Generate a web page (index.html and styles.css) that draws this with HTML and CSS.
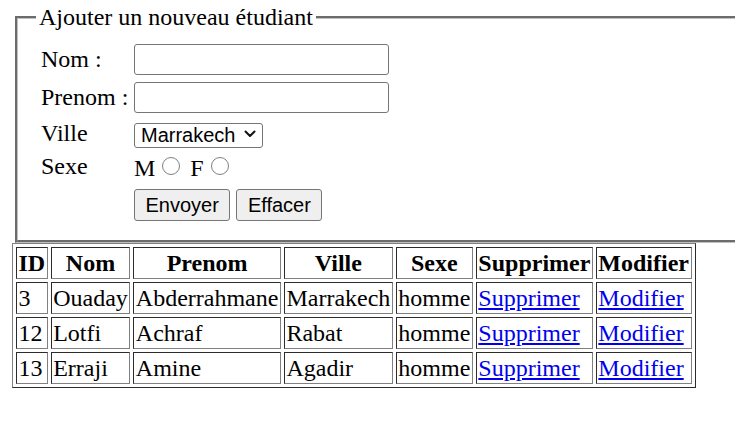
FILE: index.html
```html
<!DOCTYPE html>
<html lang="fr">
<head>
<meta charset="utf-8">
<title>Etudiants</title>
<link rel="stylesheet" href="styles.css">
</head>
<body>
<form class="student-form">
  <fieldset class="panel">
    <legend class="panel-title">Ajouter un nouveau étudiant</legend>
    <div class="form-grid">
      <label class="field-label">Nom :</label>
      <div class="field"><input type="text" class="text-input"></div>

      <label class="field-label">Prenom :</label>
      <div class="field"><input type="text" class="text-input"></div>

      <label class="field-label">Ville</label>
      <div class="field">
        <span class="select-wrap">
          <select class="city-select">
            <option>Marrakech</option>
            <option>Rabat</option>
            <option>Agadir</option>
          </select>
          <svg class="chevron" width="12" height="8" viewBox="0 0 12 8" aria-hidden="true">
            <path d="M1.5 1.5 L6 6 L10.5 1.5" fill="none" stroke="#111" stroke-width="2" stroke-linecap="round" stroke-linejoin="round"/>
          </svg>
        </span>
      </div>

      <label class="field-label sexe-label">Sexe</label>
      <div class="field sexe-field">M<input type="radio" name="sexe" class="radio"> F<input type="radio" name="sexe" class="radio"></div>

      <div class="spacer"></div>
      <div class="field actions">
        <button type="submit" class="btn">Envoyer</button>
        <button type="reset" class="btn">Effacer</button>
      </div>
    </div>
  </fieldset>
</form>
<table class="students">
  <tr>
    <th>ID</th><th>Nom</th><th>Prenom</th><th>Ville</th><th>Sexe</th><th>Supprimer</th><th>Modifier</th>
  </tr>
  <tr>
    <td>3</td><td>Ouaday</td><td>Abderrahmane</td><td>Marrakech</td><td>homme</td><td><a href="#">Supprimer</a></td><td><a href="#">Modifier</a></td>
  </tr>
  <tr>
    <td>12</td><td>Lotfi</td><td>Achraf</td><td>Rabat</td><td>homme</td><td><a href="#">Supprimer</a></td><td><a href="#">Modifier</a></td>
  </tr>
  <tr>
    <td>13</td><td>Erraji</td><td>Amine</td><td>Agadir</td><td>homme</td><td><a href="#">Supprimer</a></td><td><a href="#">Modifier</a></td>
  </tr>
</table>
</body>
</html>
```

FILE: styles.css
```css
body {
  margin: 0;
  padding: 4px 0 0 12px;
  font-family: "Liberation Serif", "Times New Roman", serif;
  font-size: 24px;
  color: #000;
  background: #fff;
}
.student-form {
  margin: 0;
}
.panel {
  margin: 0 0 0 3px;
  padding: 10px 18px 19px 18px;
  border: 3px groove #c0c0c0;
  border-right: none;
  min-width: 0;
}
.panel-title {
  padding: 0 3px;
  font-size: 24px;
}
.form-grid {
  display: grid;
  grid-template-columns: 93px auto;
  grid-template-rows: 37px 39px 33px 39px 32px;
  align-items: center;
  padding-left: 5px;
}
.field-label {
  white-space: nowrap;
}
.field {
  display: flex;
  align-items: center;
}
.text-input {
  box-sizing: border-box;
  width: 255px;
  height: 31px;
  margin: 0;
  padding: 1px 3px;
  border: 1px solid #767676;
  border-radius: 3px;
  font: 20px "Liberation Sans", Arial, sans-serif;
  background: #fff;
}
.select-wrap {
  position: relative;
  display: inline-block;
  height: 25px;
}
.city-select {
  box-sizing: border-box;
  appearance: none;
  -webkit-appearance: none;
  width: 129px;
  height: 25px;
  margin: 0;
  padding: 0 0 0 6px;
  border: 1px solid #767676;
  border-radius: 3px;
  font: 20px "Liberation Sans", Arial, sans-serif;
  line-height: 23px;
  color: #000;
  background: #fff;
}
.chevron {
  position: absolute;
  right: 7px;
  top: 9px;
  pointer-events: none;
}
.sexe-label {
  align-self: start;
  margin-top: 3px;
}
.sexe-field {
  display: block;
  align-self: start;
  margin-top: 5px;
}
.radio {
  appearance: none;
  -webkit-appearance: none;
  box-sizing: border-box;
  width: 18px;
  height: 18px;
  margin: 0 4px 1px 7px;
  border: 1.5px solid #808080;
  border-radius: 50%;
  background: #fff;
  vertical-align: baseline;
}
.actions {
  gap: 6px;
}
.btn {
  box-sizing: border-box;
  height: 32px;
  margin: 0;
  padding: 0 10.5px;
  border: 1px solid #767676;
  border-radius: 3px;
  background: #efefef;
  color: #000;
  font: 20px "Liberation Sans", Arial, sans-serif;
}
.students {
  border: 1px outset gray;
  border-spacing: 3px;
  font-size: 24px;
}
.students th,
.students td {
  border: 1px inset gray;
  padding: 1.5px;
}
.students th {
  font-weight: bold;
  text-align: center;
}
.students td {
  text-align: left;
}
.students a {
  color: #0000ee;
  text-decoration: underline;
}
```
